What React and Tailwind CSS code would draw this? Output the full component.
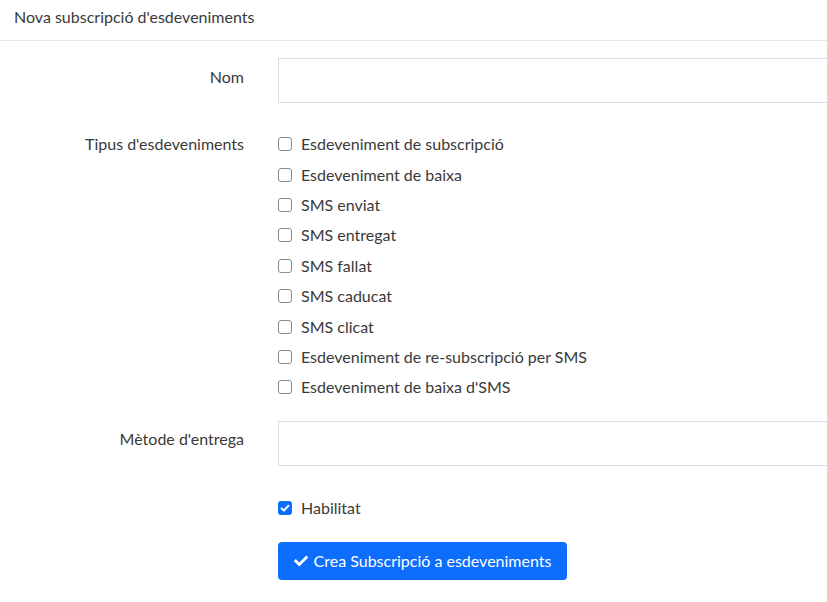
import { useState } from "react";

const eventTypes = [
  "Esdeveniment de subscripció",
  "Esdeveniment de baixa",
  "SMS enviat",
  "SMS entregat",
  "SMS fallat",
  "SMS caducat",
  "SMS clicat",
  "Esdeveniment de re-subscripció per SMS",
  "Esdeveniment de baixa d'SMS",
];

const CheckIcon = ({ className }) => (
  <svg viewBox="0 0 512 512" className={className} fill="currentColor">
    <path d="M173.9 439.4l-166.4-166.4c-10-10-10-26.2 0-36.2l36.2-36.2c10-10 26.2-10 36.2 0L192 312.7 432.1 72.6c10-10 26.2-10 36.2 0l36.2 36.2c10 10 10 26.2 0 36.2L210.1 439.4c-10 10-26.2 10-36.2 0z" />
  </svg>
);

const Box = ({ checked }) =>
  checked ? (
    <span className="flex h-[14px] w-[14px] items-center justify-center rounded-[3px] bg-[#0d6efd]">
      <svg viewBox="0 0 16 16" className="h-[12px] w-[12px]" fill="none" stroke="white" strokeWidth="2.6" strokeLinecap="round" strokeLinejoin="round">
        <path d="M3.5 8.5l3 3 6-6.5" />
      </svg>
    </span>
  ) : (
    <span className="h-[14px] w-[14px] rounded-[3px] border border-[#8a8a8a] bg-white" />
  );

const Field = ({ label, children, labelClass = "pt-[8px]" }) => (
  <div className="grid grid-cols-[244px_1fr] gap-x-[34px]">
    <div className={`text-right ${labelClass}`}>{label}</div>
    <div>{children}</div>
  </div>
);

export default function App() {
  const [checked] = useState(eventTypes.map(() => false));

  return (
    <div
      className="min-h-screen bg-white text-[16px] text-[#3a3a3a] overflow-hidden"
      style={{ fontFamily: "Lato, 'Noto Sans', sans-serif" }}
    >
      <div className="h-[41px] border-b border-[#e6e6e6] pl-[14px] pt-[5px]">
        Nova subscripció d'esdeveniments
      </div>

      <div className="pt-[17px]">
        <Field label="Nom" labelClass="pt-[7px]">
          <div className="h-[45px] w-[600px] border border-[#dcdce4] bg-white" />
        </Field>

        <div className="h-[26px]" />

        <Field label="Tipus d'esdeveniments" labelClass="pt-0 leading-[30px]">
          <div className="flex flex-col">
            {eventTypes.map((t, i) => (
              <label key={t} className="flex h-[30.4px] items-center gap-[9px]">
                <Box checked={checked[i]} />
                <span>{t}</span>
              </label>
            ))}
          </div>
        </Field>

        <div className="h-[18px]" />

        <Field label="Mètode d'entrega" labelClass="pt-[6px]">
          <div className="h-[45px] w-[600px] border border-[#dcdce4] bg-white" />
        </Field>

        <div className="h-[27px]" />

        <Field label="">
          <div className="flex items-center gap-[9px] h-[30px]">
            <Box checked />
            <span>Habilitat</span>
          </div>
          <button className="mt-[19px] flex h-[38px] w-[289px] items-center justify-center gap-[6px] rounded-[4px] bg-[#0d6efd] text-white">
            <CheckIcon className="h-[14px] w-[14px]" />
            <span>Crea Subscripció a esdeveniments</span>
          </button>
        </Field>
      </div>
    </div>
  );
}
